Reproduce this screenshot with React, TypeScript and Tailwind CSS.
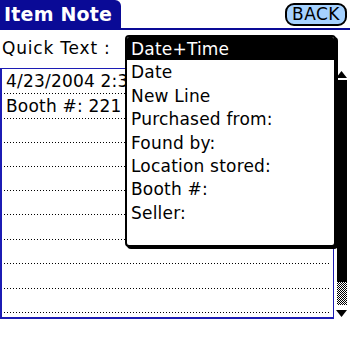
import React from 'react';

const noteRows = [
  { text: '4/23/2004 2:31 pm', h: 'h-[25px]' },
  { text: 'Booth #: 221', h: 'h-[25px]' },
  { text: '', h: 'h-[24px]' },
  { text: '', h: 'h-[24px]' },
  { text: '', h: 'h-[24px]' },
  { text: '', h: 'h-[24px]' },
  { text: '', h: 'h-[25px]' },
  { text: '', h: 'h-[24px]' },
  { text: '', h: 'h-[25px]' },
  { text: '', h: 'h-[24px]' },
];

const quickItems = [
  'Date+Time',
  'Date',
  'New Line',
  'Purchased from:',
  'Found by:',
  'Location stored:',
  'Booth #:',
  'Seller:',
];

const App: React.FC = () => {
  return (
    <div className="relative w-[350px] h-[346px] overflow-hidden bg-white text-black font-['DejaVu_Sans',sans-serif]">
      {/* title bar */}
      <div className="flex items-start justify-between h-[30px] border-b-2 border-[#0a0a96]">
        <div className="h-[28px] w-[121px] rounded-tr-[6px] bg-[#0a0a96] pl-[4px] text-white font-bold text-[19px] leading-[28px] tracking-[0.2px]">
          Item Note
        </div>
        <button
          type="button"
          className="mt-[3px] mr-[3px] h-[23px] w-[62px] rounded-[9px] border-2 border-black bg-[#a6d2ff] text-[17px] leading-[19px] tracking-[0.5px]"
        >
          BACK
        </button>
      </div>

      {/* quick text label */}
      <div className="h-[38px] pl-[2px] pt-[7px] text-[17px] leading-[22px] tracking-[0.8px]">
        Quick Text :
      </div>

      {/* note field + scroll bar */}
      <div className="flex">
        <div className="w-[334px] h-[251px] border-l-2 border-t border-r border-b-2 border-[#1c1cb4] pl-[2px] pr-[2px]">
          {noteRows.map((row, i) => (
            <div
              key={i}
              className={`${row.h} flex items-end pb-[2px] bg-[linear-gradient(to_right,#000_1px,transparent_1px)] bg-[length:3px_1px] bg-repeat-x bg-bottom`}
            >
              <span className="w-[121px] overflow-hidden whitespace-nowrap pl-[2px] text-[17px] leading-[21px] tracking-[0.2px]">
                {row.text}
              </span>
            </div>
          ))}
        </div>
        <div className="ml-[2px] w-[11px] flex flex-col items-center">
          <svg width="11" height="8" viewBox="0 0 11 8" className="mt-[2px]">
            <polygon points="5.5,1 11,8 0,8" fill="#000" />
          </svg>
          <div className="mt-[2px] w-[10px] h-[202px] bg-black" />
          <div className="w-[10px] h-[23px] bg-[repeating-conic-gradient(#000_0%_25%,#fff_0%_50%)] bg-[length:2px_2px]" />
          <svg width="11" height="8" viewBox="0 0 11 8" className="mt-[5px]">
            <polygon points="0,0 11,0 5.5,7" fill="#000" />
          </svg>
        </div>
      </div>

      {/* quick text popup list */}
      <div className="absolute left-[125px] top-[35px] w-[211px] h-[212px] rounded-[4px] border-2 border-black bg-white shadow-[2px_2px_0_#000] overflow-hidden">
        {quickItems.map((item, i) => (
          <div
            key={item}
            className={`h-[23.4px] pl-[4px] pt-[1px] text-[17px] leading-[23px] tracking-[0.2px] whitespace-nowrap ${i === 0 ? 'bg-black text-white' : ''}`}
          >
            {item}
          </div>
        ))}
      </div>
    </div>
  );
};

export default App;
